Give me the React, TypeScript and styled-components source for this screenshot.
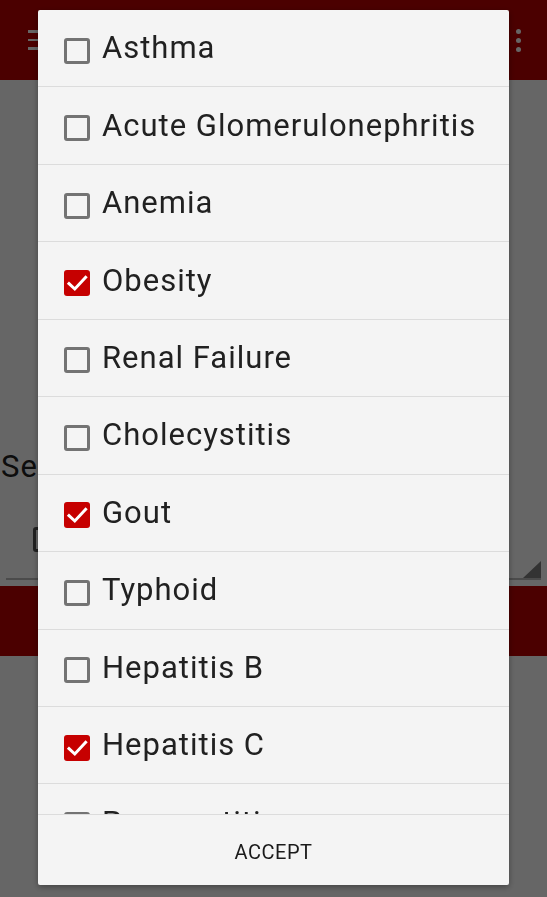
import React, { useState } from "react";
import styled, { createGlobalStyle } from "styled-components";

const GlobalStyle = createGlobalStyle`
  html, body { margin: 0; padding: 0; background: #ffffff; }
  body { font-family: Roboto, "Noto Sans", "Liberation Sans", sans-serif; }
  * { box-sizing: border-box; }
`;

const Page = styled.div`
  width: 547px;
  height: 897px;
  display: flex;
  flex-direction: column;
  background: #ffffff;
  overflow: hidden;
`;

const AppBar = styled.header`
  height: 80px;
  flex: 0 0 80px;
  background: #bb0000;
  display: flex;
  align-items: center;
  justify-content: space-between;
  padding: 0 28px 0 28px;
`;

const Hamburger = styled.div`
  width: 22px;
  display: flex;
  flex-direction: column;
  gap: 6px;
  span {
    display: block;
    height: 2.5px;
    background: #ffffff;
  }
`;

const Overflow = styled.div`
  display: flex;
  flex-direction: column;
  gap: 4px;
  margin-right: -2px;
  span {
    width: 5px;
    height: 5px;
    border-radius: 50%;
    background: #ffffff;
  }
`;

const Body = styled.main`
  flex: 1;
  display: flex;
  flex-direction: column;
`;

const FieldLabel = styled.div`
  margin: 369px 0 0 1px;
  font-size: 31px;
  letter-spacing: 1.2px;
  color: #212121;
  line-height: 36px;
  white-space: nowrap;
`;

const SpinnerRow = styled.div`
  margin: 35px 6px 0 6px;
  height: 60px;
  border-bottom: 2px solid #bcbcbc;
  position: relative;
  display: flex;
  align-items: flex-start;
  padding: 7px 0 0 27px;
`;

const SpinnerBox = styled.div`
  width: 26px;
  height: 25px;
  border: 3px solid #555;
  border-radius: 3px;
`;

const SpinnerArrow = styled.div`
  position: absolute;
  right: 0;
  bottom: 0;
  width: 0;
  height: 0;
  border-left: 18px solid transparent;
  border-bottom: 17px solid #808080;
`;

const ActionBand = styled.div`
  margin-top: 6px;
  height: 70px;
  background: #bb0000;
`;

const Scrim = styled.div`
  position: fixed;
  inset: 0;
  background: rgba(0, 0, 0, 0.6);
  display: flex;
  padding: 10px 38px 12px 38px;
`;

const Dialog = styled.div`
  width: 471px;
  height: 875px;
  background: #f4f4f4;
  border-radius: 2px;
  box-shadow: 0 2px 6px rgba(0, 0, 0, 0.35);
  display: flex;
  flex-direction: column;
  overflow: hidden;
`;

const List = styled.div`
  flex: 1;
  overflow: hidden;
`;

const Row = styled.label`
  height: 77.44px;
  border-bottom: 1px solid #dcdcdc;
  display: flex;
  align-items: center;
  gap: 12px;
  padding-left: 26px;
  cursor: pointer;
`;

const Box = styled.span<{ $checked: boolean }>`
  flex: 0 0 26px;
  width: 26px;
  height: 26px;
  margin-top: 5px;
  border-radius: 3px;
  border: ${(p) => (p.$checked ? "none" : "3px solid #737373")};
  background: ${(p) => (p.$checked ? "#c60000" : "transparent")};
  display: flex;
  align-items: center;
  justify-content: center;
`;

const Label = styled.span`
  font-size: 31px;
  letter-spacing: 1px;
  color: #212121;
  white-space: nowrap;
  margin-top: -1px;
`;

const Footer = styled.div`
  flex: 0 0 71px;
  height: 71px;
  border-top: 1px solid #dcdcdc;
  display: flex;
  align-items: center;
  justify-content: center;
`;

const AcceptButton = styled.button`
  background: none;
  border: none;
  font-family: Roboto, "Noto Sans", "Liberation Sans", sans-serif;
  font-size: 20px;
  color: #1a1a1a;
  letter-spacing: 0.5px;
  padding: 3px 0 0 0;
  cursor: pointer;
`;

const CheckMark = () => (
  <svg width="26" height="26" viewBox="0 0 26 26">
    <path
      d="M5 13.6 L10.8 19 L21.6 7.4"
      fill="none"
      stroke="#ffffff"
      strokeWidth="3"
      strokeLinecap="square"
    />
  </svg>
);

const diseases = [
  { name: "Asthma", checked: false },
  { name: "Acute Glomerulonephritis", checked: false },
  { name: "Anemia", checked: false },
  { name: "Obesity", checked: true },
  { name: "Renal Failure", checked: false },
  { name: "Cholecystitis", checked: false },
  { name: "Gout", checked: true },
  { name: "Typhoid", checked: false },
  { name: "Hepatitis B", checked: false },
  { name: "Hepatitis C", checked: true },
  { name: "Pancreatitis", checked: false },
];

export default function App() {
  const [items, setItems] = useState(diseases);
  const toggle = (i: number) =>
    setItems((prev) => prev.map((d, j) => (j === i ? { ...d, checked: !d.checked } : d)));

  return (
    <>
      <GlobalStyle />
      <Page>
        <AppBar>
          <Hamburger>
            <span />
            <span />
            <span />
          </Hamburger>
          <Overflow>
            <span />
            <span />
            <span />
          </Overflow>
        </AppBar>
        <Body>
          <FieldLabel>Select Diseases</FieldLabel>
          <SpinnerRow>
            <SpinnerBox />
            <SpinnerArrow />
          </SpinnerRow>
          <ActionBand />
        </Body>
      </Page>
      <Scrim>
        <Dialog>
          <List>
            {items.map((d, i) => (
              <Row key={d.name} onClick={() => toggle(i)}>
                <Box $checked={d.checked}>{d.checked && <CheckMark />}</Box>
                <Label>{d.name}</Label>
              </Row>
            ))}
          </List>
          <Footer>
            <AcceptButton>ACCEPT</AcceptButton>
          </Footer>
        </Dialog>
      </Scrim>
    </>
  );
}
